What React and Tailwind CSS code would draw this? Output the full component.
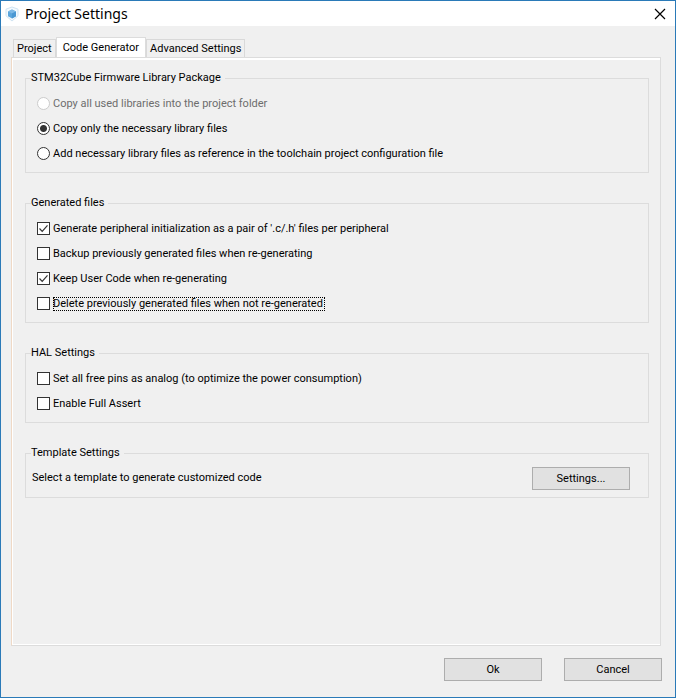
import { useState } from "react";

const LIBRARY_OPTIONS = [
  { id: "copy-all", label: "Copy all used libraries into the project folder", disabled: true },
  { id: "copy-necessary", label: "Copy only the necessary library files" },
  {
    id: "reference",
    label: "Add necessary library files as reference in the toolchain project configuration file",
  },
];

const GENERATED_OPTIONS = [
  {
    id: "pair",
    label: "Generate peripheral initialization as a pair of '.c/.h' files per peripheral",
    checked: true,
  },
  { id: "backup", label: "Backup previously generated files when re-generating" },
  { id: "keep", label: "Keep User Code when re-generating", checked: true },
  { id: "delete", label: "Delete previously generated files when not re-generated", outlined: true },
];

const HAL_OPTIONS = [
  { id: "analog", label: "Set all free pins as analog (to optimize the power consumption)" },
  { id: "assert", label: "Enable Full Assert" },
];

const TABS = ["Project", "Code Generator", "Advanced Settings"];

function CubeIcon() {
  return (
    <svg viewBox="0 0 16 16" className="size-4" aria-hidden="true">
      <path d="M8 1l6 2.2v6.6L8 15 2 9.8V3.2z" fill="#f4fafe" stroke="#cfe3f2" />
      <path d="M8 3.6l4 2v4.6l-4 2.2-4-2.2V5.6z" fill="#5aa5dc" />
      <path d="M8 3.6l4 2-4 2-4-2z" fill="#7db9e6" />
      <path d="M8 7.6l4-2v4.6l-4 2.2z" fill="#4a97d2" />
    </svg>
  );
}

function CheckMark() {
  return (
    <svg
      viewBox="0 0 13 13"
      className="pointer-events-none absolute inset-0 hidden size-[13px] peer-checked:block"
      aria-hidden="true"
    >
      <path d="M2.5 6.5l2.7 2.8 5.3-6" fill="none" stroke="#333" strokeWidth="1.2" />
    </svg>
  );
}

function Group({ title, children }) {
  return (
    <fieldset className="min-w-0 border border-[#dcdcdc] px-[5px] pt-[5px] pb-1.5">
      <legend className="pr-1 leading-4">{title}</legend>
      {children}
    </fieldset>
  );
}

function RadioRow({ option, selected, onSelect }) {
  return (
    <div className="flex h-[25px] items-center gap-[3px] pl-1.5">
      <input
        id={option.id}
        type="radio"
        name="library"
        disabled={option.disabled}
        checked={selected === option.id}
        onChange={() => onSelect(option.id)}
        className="size-[13px] shrink-0 appearance-none rounded-full border border-[#333] bg-white checked:bg-[radial-gradient(circle,#333_0_3px,white_4px)] disabled:border-[#ccc]"
      />
      <label
        htmlFor={option.id}
        className={option.disabled ? "leading-4 text-[#6d6d6d]" : "leading-4"}
      >
        {option.label}
      </label>
    </div>
  );
}

function CheckRow({ option }) {
  return (
    <div className="flex h-[25px] items-center gap-[3px] pl-1.5">
      <span className="relative size-[13px] shrink-0">
        <input
          id={option.id}
          type="checkbox"
          defaultChecked={option.checked}
          className="peer block size-[13px] appearance-none border border-[#333] bg-white"
        />
        <CheckMark />
      </span>
      <label
        htmlFor={option.id}
        className={
          option.outlined
            ? "pr-0.5 leading-[14px] outline-1 -outline-offset-1 outline-dotted outline-black"
            : "leading-4"
        }
      >
        {option.label}
      </label>
    </div>
  );
}

function PushButton({ children }) {
  return (
    <button
      type="button"
      className="h-[23px] w-[98px] shrink-0 border border-[#adadad] bg-[#e1e1e1] leading-4"
    >
      {children}
    </button>
  );
}

export default function App() {
  const [tab, setTab] = useState("Code Generator");
  const [library, setLibrary] = useState("copy-necessary");

  return (
    <main className="flex min-h-screen flex-col border border-[#2a7ab8] bg-[#f0f0f0] font-[Roboto,sans-serif] text-[11px] text-black">
      <header className="flex h-[25px] items-center justify-between bg-white pr-[9px] pl-[3px]">
        <div className="flex items-center gap-[5px]">
          <CubeIcon />
          <h1 className="font-['Noto_Sans','Open_Sans',sans-serif] text-sm leading-6">
            Project Settings
          </h1>
        </div>
        <button type="button" aria-label="Close">
          <svg viewBox="0 0 12 12" className="size-3" aria-hidden="true">
            <path d="M1 1l10 10M11 1L1 11" stroke="#000" strokeWidth="1.2" />
          </svg>
        </button>
      </header>

      <div className="flex flex-1 flex-col pt-[11px] pr-[14px] pl-[10px]">
        <div role="tablist" className="flex items-end pl-0.5">
          {TABS.map((name) => (
            <button
              key={name}
              type="button"
              role="tab"
              aria-selected={tab === name}
              onClick={() => setTab(name)}
              className={
                tab === name
                  ? "h-5 border border-b-0 border-[#dcdcdc] bg-white px-1.5 leading-4"
                  : "h-[18px] border border-b-0 border-[#d9d9d9] bg-[#f0f0f0] px-[3px] leading-4"
              }
            >
              {name}
            </button>
          ))}
        </div>

        <div
          role="tabpanel"
          className="flex flex-1 flex-col gap-[22px] border border-[#dcdcdc] border-l-[#efd9c6] bg-[#f0f0f0] pt-[12px] pr-[11px] pl-[13px] shadow-[inset_0_2px_0_white,inset_1px_0_0_white,inset_0_-1px_0_white]"
        >
          <Group title="STM32Cube Firmware Library Package">
            {LIBRARY_OPTIONS.map((o) => (
              <RadioRow key={o.id} option={o} selected={library} onSelect={setLibrary} />
            ))}
          </Group>
          <Group title="Generated files">
            {GENERATED_OPTIONS.map((o) => (
              <CheckRow key={o.id} option={o} />
            ))}
          </Group>
          <Group title="HAL Settings">
            {HAL_OPTIONS.map((o) => (
              <CheckRow key={o.id} option={o} />
            ))}
          </Group>
          <Group title="Template Settings">
            <div className="flex h-[25px] items-center justify-between pr-[13px] pl-px">
              <span>Select a template to generate customized code</span>
              <PushButton>Settings...</PushButton>
            </div>
          </Group>
        </div>
      </div>

      <footer className="flex justify-end gap-[22px] pt-3 pr-[13px] pb-4">
        <PushButton>Ok</PushButton>
        <PushButton>Cancel</PushButton>
      </footer>
    </main>
  );
}
